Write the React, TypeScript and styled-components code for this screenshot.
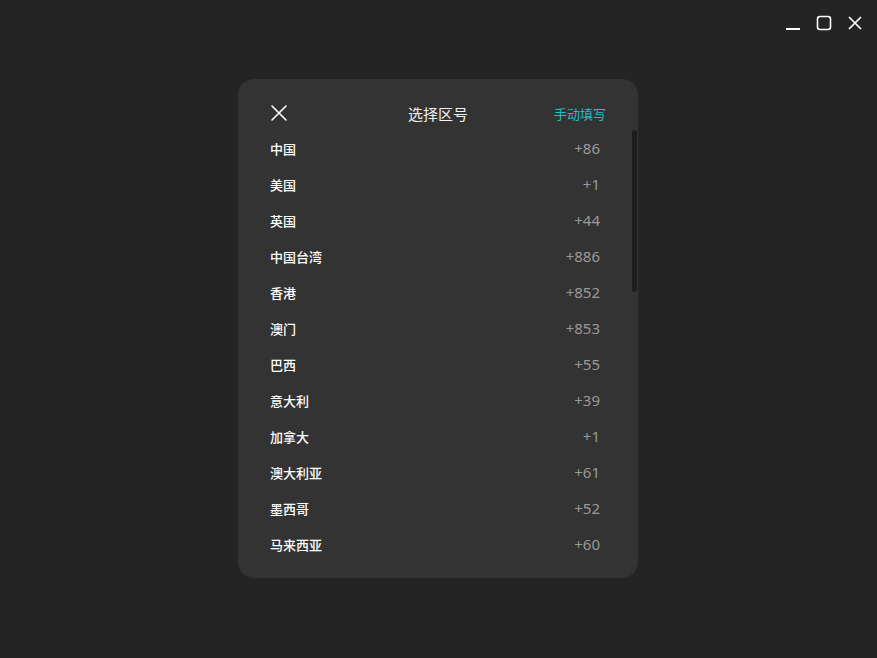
import * as React from 'react';
import styled, { createGlobalStyle } from 'styled-components';

const GlobalStyle = createGlobalStyle`
	html, body, #root {
		margin: 0;
		height: 100%;
	}
	body {
		background: #242424;
		font-family: "Noto Sans", "Noto Sans CJK SC", sans-serif;
		overflow: hidden;
	}
`;

const countries: [string, string][] = [
	['中国', '+86'],
	['美国', '+1'],
	['英国', '+44'],
	['中国台湾', '+886'],
	['香港', '+852'],
	['澳门', '+853'],
	['巴西', '+55'],
	['意大利', '+39'],
	['加拿大', '+1'],
	['澳大利亚', '+61'],
	['墨西哥', '+52'],
	['马来西亚', '+60'],
	['日本', '+81'],
	['韩国', '+82'],
	['德国', '+49'],
	['法国', '+33'],
	['俄罗斯', '+7'],
	['印度', '+91'],
	['新加坡', '+65'],
	['泰国', '+66'],
	['越南', '+84'],
	['菲律宾', '+63'],
	['印度尼西亚', '+62'],
	['西班牙', '+34'],
	['荷兰', '+31'],
	['瑞士', '+41'],
	['瑞典', '+46'],
	['新西兰', '+64'],
	['阿根廷', '+54'],
	['南非', '+27'],
	['土耳其', '+90'],
	['埃及', '+20'],
];

const Page = styled.div`
	height: 100%;
	display: flex;
	flex-direction: column;
`;

const TitleBar = styled.div`
	display: flex;
	justify-content: flex-end;
	align-items: center;
	gap: 10px;
	padding: 12px 12px 0 0;
`;

const WinButton = styled.button`
	width: 21px;
	height: 21px;
	padding: 0;
	border: none;
	background: none;
	display: flex;
	align-items: center;
	justify-content: center;
	color: #ffffff;
	cursor: pointer;
`;

const Stage = styled.div`
	display: flex;
	justify-content: center;
	padding: 46px 1px 0 0;
`;

const Dialog = styled.div`
	width: 400px;
	height: 499px;
	background: #333333;
	border-radius: 16px;
	display: flex;
	flex-direction: column;
	padding: 19px 0 16px;
	box-sizing: border-box;
`;

const Header = styled.div`
	height: 30px;
	margin-bottom: 2px;
	display: grid;
	grid-template-columns: 1fr auto 1fr;
	align-items: center;
	padding: 0 32px;
	flex-shrink: 0;
`;

const CloseButton = styled.button`
	justify-self: start;
	width: 18px;
	height: 18px;
	padding: 0;
	border: none;
	background: none;
	color: #ffffff;
	display: flex;
	cursor: pointer;
`;

const Title = styled.div`
	color: #f2f2f2;
	font-size: 15px;
	font-family: "Noto Sans CJK SC", sans-serif;
`;

const Manual = styled.button`
	justify-self: end;
	border: none;
	background: none;
	padding: 0;
	color: #1ec0c4;
	font-size: 13px;
	font-family: "Noto Sans CJK SC", sans-serif;
	cursor: pointer;
`;

const ListArea = styled.div`
	flex: 1;
	min-height: 0;
	display: flex;
`;

const Scroller = styled.div`
	flex: 1;
	overflow-y: auto;
	scrollbar-width: none;
	&::-webkit-scrollbar {
		display: none;
	}
`;

const Track = styled.div`
	position: relative;
	width: 5px;
	margin-right: 1px;
	flex-shrink: 0;
`;

const Thumb = styled.div`
	position: absolute;
	left: 0;
	right: 0;
	background: #1d1d1d;
	border-radius: 3px;
`;

const Row = styled.div`
	height: 36px;
	display: flex;
	align-items: center;
	justify-content: space-between;
	padding: 0 32px;
	cursor: pointer;
`;

const Name = styled.span`
	color: #ffffff;
	font-size: 13px;
	font-weight: 500;
	font-family: "Noto Sans CJK SC", sans-serif;
`;

const Code = styled.span`
	color: #999999;
	font-size: 15px;
	font-family: "Noto Sans", "Open Sans", sans-serif;
`;

const CrossIcon = ({ size }: { size: number }) => (
	<svg width={size} height={size} viewBox="0 0 18 18" fill="none" stroke="currentColor" strokeWidth="1.6" strokeLinecap="round">
		<path d="M2 2 L16 16 M16 2 L2 16" />
	</svg>
);

// list with a thin custom scroll thumb in its own gutter
function CountryList() {
	const ref = React.useRef<HTMLDivElement>(null);
	const [thumb, setThumb] = React.useState({ top: 0, height: 0 });

	const measure = React.useCallback(() => {
		const el = ref.current;
		if (!el) return;
		const ratio = el.clientHeight / el.scrollHeight;
		if (ratio >= 1) {
			setThumb({ top: 0, height: 0 });
			return;
		}
		setThumb({
			top: el.scrollTop * ratio,
			height: el.clientHeight * ratio,
		});
	}, []);

	React.useLayoutEffect(() => {
		measure();
	}, [measure]);

	return (
		<ListArea>
			<Scroller ref={ref} onScroll={measure}>
				{countries.map(([name, code]) => (
					<Row key={name}>
						<Name>{name}</Name>
						<Code>{code}</Code>
					</Row>
				))}
			</Scroller>
			<Track>
				{thumb.height > 0 && <Thumb style={{ top: thumb.top, height: thumb.height }} />}
			</Track>
		</ListArea>
	);
}

export default function App() {
	return (
		<Page>
			<GlobalStyle />
			<TitleBar>
				<WinButton aria-label="minimize">
					<svg width="16" height="16" viewBox="0 0 16 16" fill="none" stroke="currentColor" strokeWidth="2">
						<path d="M1 14 H15" />
					</svg>
				</WinButton>
				<WinButton aria-label="maximize">
					<svg width="16" height="16" viewBox="0 0 16 16" fill="none" stroke="currentColor" strokeWidth="1.6">
						<rect x="1.5" y="1.5" width="13" height="13" rx="2.5" />
					</svg>
				</WinButton>
				<WinButton aria-label="close">
					<svg width="16" height="16" viewBox="0 0 16 16" fill="none" stroke="currentColor" strokeWidth="1.7">
						<path d="M2 2 L14 14 M14 2 L2 14" />
					</svg>
				</WinButton>
			</TitleBar>
			<Stage>
				<Dialog>
					<Header>
						<CloseButton aria-label="close dialog">
							<CrossIcon size={18} />
						</CloseButton>
						<Title>选择区号</Title>
						<Manual>手动填写</Manual>
					</Header>
					<CountryList />
				</Dialog>
			</Stage>
		</Page>
	);
}
